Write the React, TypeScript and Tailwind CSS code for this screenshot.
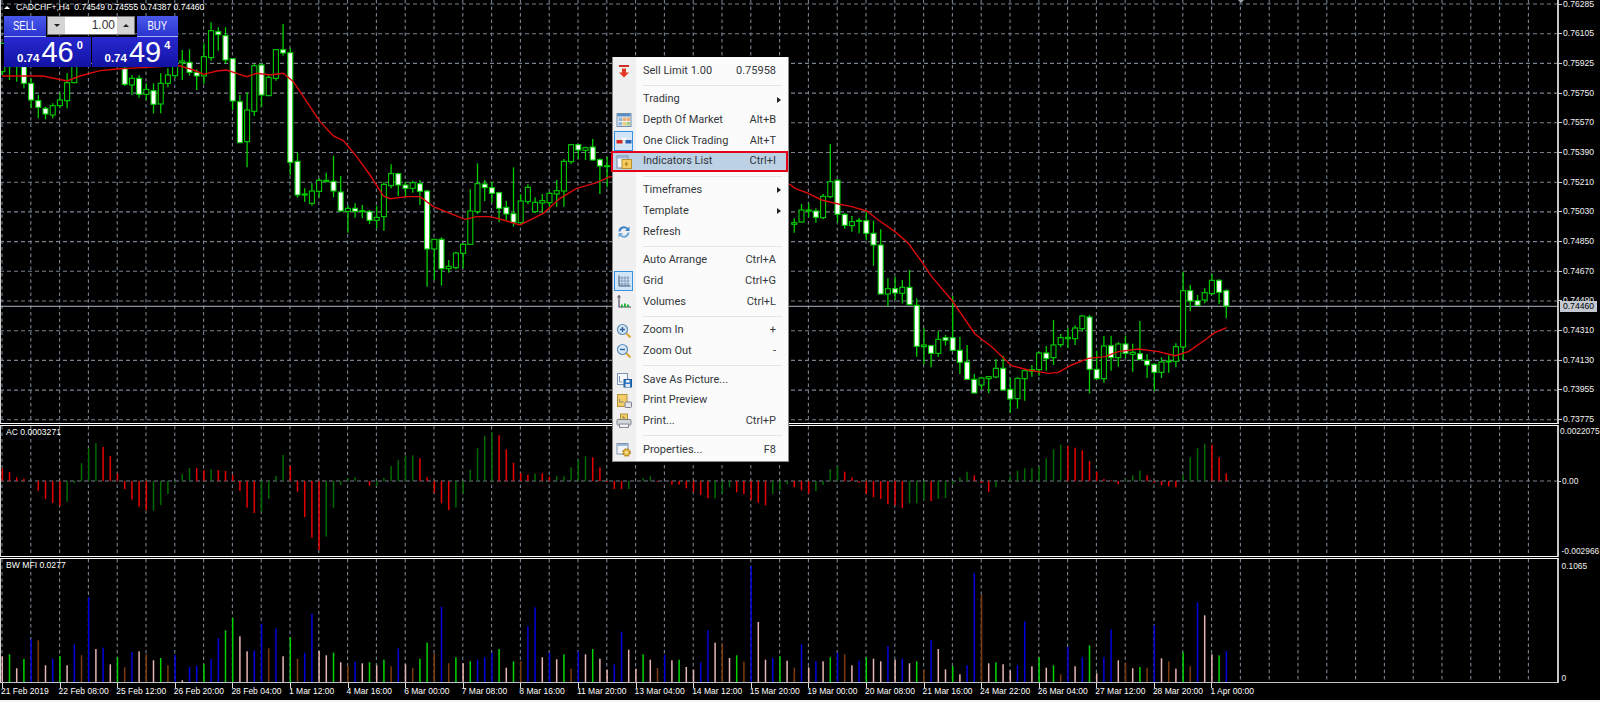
import React from "react";

type C = [number, number, number, number, number];
const W = 1, K = 0;
// [bodyTop, bodyBottom, high, low, white?] in zoomed units
const z1: [number, C][] = [
  [0, [130, 215, 130, 225, K]], [1, [190, 200, 190, 240, K]], [2, [190, 200, 190, 245, K]], [3, [200, 250, 190, 265, W]],
  [4, [250, 300, 235, 325, W]], [5, [302, 322, 285, 355, W]], [6, [325, 342, 320, 358, W]], [7, [317, 345, 310, 355, K]],
  [8, [300, 317, 278, 325, K]], [9, [248, 302, 220, 325, K]], [10, [190, 248, 190, 250, K]],
  [17, [205, 253, 190, 258, W]], [18, [235, 255, 225, 285, K]], [19, [235, 283, 225, 293, W]], [20, [268, 283, 250, 300, K]],
  [21, [272, 313, 250, 340, W]], [22, [250, 312, 220, 340, K]], [23, [225, 250, 205, 262, K]],
];
const z9: C[] = [
  [150, 197, 140, 205, K], [153, 158, 120, 210, K], [157, 187, 118, 197, W], [187, 198, 178, 240, W], [140, 198, 100, 222, K],
  [62, 143, 37, 152, K], [65, 74, 52, 122, W], [77, 150, 52, 160, W], [146, 273, 146, 300, W], [275, 398, 255, 400, W],
  [300, 395, 247, 472, K], [167, 304, 162, 318, K], [165, 255, 160, 290, W], [202, 257, 195, 258, K], [119, 205, 118, 212, K],
  [119, 129, 42, 137, W], [128, 457, 115, 495, W], [454, 555, 428, 563, W], [552, 555, 535, 575, K], [543, 580, 520, 587, K],
  [511, 544, 505, 562, K], [511, 515, 488, 517, K], [514, 543, 437, 562, W], [546, 603, 498, 605, W], [595, 604, 585, 668, K],
  [595, 604, 580, 623, W], [602, 605, 585, 625, K], [605, 631, 600, 642, W], [622, 631, 587, 655, K], [523, 620, 517, 662, K],
  [491, 527, 463, 535, K], [491, 525, 488, 558, W], [525, 535, 515, 560, W], [518, 535, 512, 548, K], [521, 544, 510, 585, W],
  [543, 717, 540, 830, W], [688, 717, 688, 810, K], [688, 776, 682, 827, W], [769, 776, 750, 788, K], [729, 773, 725, 778, K],
  [703, 730, 700, 775, K], [603, 703, 538, 705, K], [521, 605, 460, 612, K], [522, 533, 510, 573, W], [533, 550, 515, 578, W],
  [548, 595, 545, 637, W], [592, 612, 572, 630, W], [611, 637, 472, 650, W], [573, 638, 553, 642, K], [532, 575, 523, 583, K],
  [577, 605, 562, 610, K], [572, 579, 552, 608, K], [550, 578, 545, 598, K], [542, 552, 510, 590, K], [454, 543, 447, 590, K],
  [404, 455, 402, 462, K], [404, 420, 402, 447, W], [413, 421, 410, 450, K], [411, 450, 387, 452, W], [449, 468, 445, 552, W],
  [467, 469, 440, 532, K],
];
const z10: C[] = [
  [278, 283, 265, 308, K], [240, 276, 222, 278, K], [240, 243, 220, 262, K], [243, 262, 235, 278, W], [199, 263, 192, 268, K],
  [155, 200, 42, 205, K], [151, 253, 148, 278, W], [253, 286, 250, 296, W], [275, 287, 258, 305, K], [271, 274, 264, 310, K],
  [272, 310, 245, 330, W], [310, 345, 272, 407, W], [345, 492, 298, 493, W], [476, 492, 445, 528, K], [476, 489, 440, 510, W],
  [472, 490, 450, 520, K], [472, 524, 420, 526, W], [526, 649, 505, 680, W], [645, 650, 595, 703, K], [647, 670, 645, 712, W],
  [628, 670, 603, 680, K], [623, 631, 615, 647, W], [623, 661, 498, 663, W], [661, 697, 620, 732, W], [696, 748, 645, 750, W],
  [748, 789, 732, 790, W], [744, 765, 740, 778, K], [740, 746, 738, 790, K], [715, 741, 688, 745, K], [715, 780, 677, 783, W],
  [778, 807, 745, 848, W], [745, 806, 742, 836, K], [722, 746, 718, 812, K], [719, 724, 705, 740, K], [669, 719, 665, 737, K],
  [669, 686, 648, 722, W], [645, 683, 570, 705, K], [623, 644, 612, 652, K], [622, 626, 595, 654, K], [594, 626, 586, 645, K],
  [558, 596, 555, 605, K], [561, 718, 555, 790, W], [718, 746, 662, 750, W], [648, 746, 618, 758, K], [647, 683, 617, 722, W],
  [642, 683, 637, 710, K], [642, 670, 617, 685, W], [667, 673, 641, 725, K], [671, 689, 573, 691, W], [691, 705, 672, 744, W],
  [703, 727, 700, 783, W], [696, 727, 682, 744, K], [693, 696, 676, 728, K], [650, 694, 640, 712, K], [482, 651, 425, 690, K],
  [482, 513, 465, 543, W], [512, 526, 495, 528, W], [488, 510, 475, 520, K], [451, 491, 433, 495, K], [451, 487, 448, 522, W],
  [482, 528, 478, 565, W],
];

type Bar = { i: number; w: number; c: number[] };
const bars: Bar[] = [];
const add = (i: number, c: C, oy: number) => {
  bars.push({ i, w: c[4], c: [oy + c[0] / 3, oy + c[1] / 3, oy + c[2] / 3, oy + c[3] / 3] });
};
z1.forEach(([i, c]) => add(i, c, 0));
z9.forEach((c, n) => add(24 + n, c, 10));
z10.forEach((c, n) => add(110 + n, c, 130));
const bx = (i: number) => 2.3 + 7.2 * i;

const ma1 = [[2, 228], [20, 228], [43, 228], [67, 243], [80, 228], [100, 212], [117, 207], [128, 205], [180, 197]].map(([x, y]) => [x, y / 3]);
const ma2 = [[150, 168], [190, 180], [222, 193], [260, 183], [290, 180], [320, 190], [350, 200], [380, 190], [420, 195], [460, 190], [490, 215], [520, 260], [570, 335], [610, 378], [640, 392], [680, 440], [720, 495], [760, 558], [780, 566], [830, 560], [870, 560], [910, 590], [960, 610], [1005, 628], [1040, 620], [1080, 620], [1120, 630], [1170, 645], [1240, 610], [1290, 565], [1340, 535], [1400, 518], [1440, 500]].map(([x, y]) => [130 + x / 3, 10 + y / 3]);
const ma3 = [[15, 163], [30, 175], [70, 190], [110, 210], [160, 222], [200, 230], [245, 243], [280, 270], [330, 305], [370, 340], [410, 395], [440, 440], [500, 510], [570, 612], [620, 650], [680, 707], [730, 720], [790, 730], [820, 727], [860, 705], [910, 685], [960, 680], [1000, 665], [1060, 657], [1120, 665], [1170, 677], [1210, 665], [1260, 630], [1290, 607], [1325, 593]].map(([x, y]) => [785 + x / 3, 130 + y / 3]);
const maPts = [...ma1, ...ma2, ...ma3].map((p) => p.join(",")).join(" ");

// AC: colour r/g and offset from zero line
const acRaw = "r-12.7 r-9 r-3.7 r-2.3 r0 r9.7 r18 r22 r24.7 g20.7 g2.3 g-17.7 g-32.7 g-37.7 r-34 r-25 r-7.7 r8 r18.7 r25.7 r29.3 g29.7 g24 g13 g1.7 g-7 g-13 r-13 r-10.7 g-11.7 r-10.7 r-10 r-6 r10 r26.7 r32 g30.3 g17.7 g-5 g-26 r-15 r10.7 r36 r56.7 r69 g55.7 g26.7 g4 g-3 g-3.7 r0 r4.7 g5 g-3 g-15 g-21 g-25 g-25.7 r-22.7 r-3.7 r12 r22.3 r29 g26.3 g12.7 g-11.3 g-32.7 g-45.3 g-48.7 r-45.7 r-31.7 r-18.3 r-8 r-6.3 g-7.3 r-7.7 r-4.3 g-4.7 g-4.7 g-13.7 g-21.7 g-24.7 r-23.7 r-13.7 r1 r8 r8 g8 g0 g-3 g-4.7 r1 r0 r3.7 r3.7 r7.3 r11 r14 r17.3 g17.3 g12.7 g6.3 r11.3 r13 r19 r21.7 r24.3 g13.3 g9 g3.3 r6.3 r9.3 r12.7 g10.3 g3.7 g-11.7 g-15 r-9.3 r-3.7 r1.7 r12.7 r16.3 r18 r23.3 r24.3 r27 g22.3 g22.3 g19.3 r20 g18 g17 g3.3 g-3.7 g-9.3 r-5.7 r2 r11 g6.3 g0 g-5.3 g-10.3 g-12.7 g-12.7 g-14.3 g-22.7 g-31.7 g-36.3 r-35 r-33.3 r-30.7 r-20 r-9.3 r-2 r-0.7 r3.3 g-2 g-5.7 g-10.3 r-5.7 r1.7 r4 r5.3 r6.3 g-5.7 g-23.7 g-32.7 g-37.3 r-36.3 r-23.7 r-7.7".split(" ");
// MFI: colour and height
const mfiRaw = "p25.7 g27.7 p13.7 g23 b42.7 n41.7 p16.7 b23 g26 p16.7 b37.7 n26.7 b85 p33 b34.3 p17.7 g24.7 n14.7 b30 p30.7 n27.7 p21.7 g24 n16.7 b27 p1.7 b15 b16.3 g17.7 b23 b43.7 g51.7 g64.3 p45.7 p30.7 b31.7 b58.3 n33.7 b53.7 p25.7 g44.7 n23.3 b29.3 b68.3 p31 p26.7 g29.3 p19.7 n16 b20.3 p18.7 g19.7 p16.7 g22.3 n15.7 b33.7 p17.7 n14 g23.3 g39.3 n28.7 b75.3 n18.7 g24.7 p18.7 g20.7 b22.3 b24.7 b29.3 g33 p14.3 g20.7 n21 b55.7 b74.7 p24.7 b29.3 p22.7 g27.7 n13.3 b30.7 p27.7 g33 p23.3 p12.3 b17.7 b50.3 p32.3 p13.3 g27.7 p22.3 n14 b27 p21.7 g22.3 p15 p12.3 b19.7 b51.7 p39.3 n38.7 p24 g26.7 n20.3 b116 p60 p22.3 b24 g25.7 p21.3 n14.3 b37.7 p14.7 b20.7 p20.7 g24.7 b29.3 n27.7 p16.7 b21.3 g24.7 p23.3 p20.7 b35.7 p22.3 b23.3 p18.7 g20.7 n12.3 b42 p33 p12.7 g16 p7.7 b16.7 b108.7 n87.3 p18.7 g19.7 p17.7 p11.7 b16.7 b60.7 p15.7 g24.7 p14.3 g16.7 n7.7 b35 p15.7 b24.7 g36.7 p8.7 b24.7 b52.7 p21.7 n19.7 p13.7 g15 n14.3 b57 p23.7 n20.7 p13.3 g29.7 n15.7 b79.7 p66.7 p27.7 g26.7 b31".split(" ");
const acColor: Record<string, string> = { r: "#e80000", g: "#006a00" };
const mfiColor: Record<string, string> = { b: "#0000dc", g: "#00d400", n: "#7c3c10", p: "#e8b4b4" };

const GRID = "#78828f";
const vx = Array.from({ length: 54 }, (_, k) => 2 + 28.8 * k);
const prices = ["0.76285", "0.76105", "0.75925", "0.75750", "0.75570", "0.75390", "0.75210", "0.75030", "0.74850", "0.74670", "0.74490", "0.74310", "0.74130", "0.73955", "0.73775"];
const dates = ["21 Feb 2019", "22 Feb 08:00", "25 Feb 12:00", "26 Feb 20:00", "28 Feb 04:00", "1 Mar 12:00", "4 Mar 16:00", "6 Mar 00:00", "7 Mar 08:00", "8 Mar 16:00", "11 Mar 20:00", "13 Mar 04:00", "14 Mar 12:00", "15 Mar 20:00", "19 Mar 00:00", "20 Mar 08:00", "21 Mar 16:00", "24 Mar 22:00", "26 Mar 04:00", "27 Mar 12:00", "28 Mar 20:00", "1 Apr 00:00"];

const VLines = ({ y1, y2 }: { y1: number; y2: number }) => (
  <g stroke={GRID} strokeWidth="1.1" strokeDasharray="3.5 3">
    {vx.map((x) => <line key={x} x1={x} x2={x} y1={y1} y2={y2} />)}
  </g>
);

/* ---------- menu icons ---------- */
const I = ({ children }: { children: React.ReactNode }) => <svg width="16" height="16" viewBox="0 0 16 16">{children}</svg>;
const icons: Record<string, React.ReactNode> = {
  sell: <I><rect x="3" y="2" width="10" height="2" fill="#c83228" /><path d="M6 5.5h4v4h3l-5 5-5-5h3z" fill="#e23a22" /></I>,
  depth: <I><rect x="1" y="1.5" width="14" height="13" fill="#eef2f6" stroke="#6e8db0" /><rect x="1.5" y="2" width="13" height="2.5" fill="#5c8fc4" /><rect x="2.5" y="5.5" width="3.5" height="3.5" fill="#8fb6dd" /><rect x="2.5" y="10" width="3.5" height="3.5" fill="#8fb6dd" /><rect x="6.5" y="5.5" width="3.5" height="3.5" fill="#eab07a" /><rect x="6.5" y="10" width="3.5" height="3.5" fill="#ecd07a" /><rect x="10.5" y="5.5" width="3.5" height="3.5" fill="#eab07a" /><rect x="10.5" y="10" width="3.5" height="3.5" fill="#a8cc7e" /></I>,
  click: <I><rect x="0.5" y="4" width="15" height="8" fill="#dbe6ef" /><rect x="0.5" y="7" width="6" height="3.5" fill="#d42a22" /><rect x="9.5" y="7" width="6" height="3.5" fill="#2a62b8" /><rect x="6" y="5" width="4" height="2" fill="#fff" /></I>,
  ind: <I><rect x="1" y="2" width="11" height="12" fill="#f4f6fa" stroke="#6d84a6" /><rect x="1.5" y="2.5" width="10" height="2" fill="#8fb0d4" /><rect x="6" y="5.5" width="9.5" height="9" fill="#f2cc5e" stroke="#b98f2e" /><path d="M11 7l-2.5 3.5h2L9.5 13l3-3.5h-2z" fill="#a86c10" /></I>,
  refresh: <I><path d="M2.5 7.5A5.5 5.5 0 0 1 12 4l1.5-1.5V7H9l1.7-1.7A3.7 3.7 0 0 0 4.5 7.5z" fill="#3c82c8" /><path d="M13.5 8.5A5.5 5.5 0 0 1 4 12l-1.5 1.5V9H7l-1.7 1.7a3.7 3.7 0 0 0 6.2-2.2z" fill="#6da8dc" /></I>,
  grid: <I><path d="M3 5h10.5M3 8h10.5M3 11h10.5M6 3v10M9 3v10M12 3v10" fill="none" stroke="#7f97b4" strokeWidth="0.9" /><path d="M3 2.5v10.5h11.5" fill="none" stroke="#3d5270" strokeWidth="1" /></I>,
  vol: <I><path d="M3 1.5v11.5h12" fill="none" stroke="#445" strokeWidth="1.1" /><path d="M1.5 3.5L3 1.5l1.5 2" fill="none" stroke="#445" /><rect x="5" y="10.5" width="1.8" height="2.5" fill="#18b030" /><rect x="8" y="9.5" width="1.8" height="3.5" fill="#18b030" /><rect x="11" y="10.5" width="1.8" height="2.5" fill="#18b030" /></I>,
  zin: <I><circle cx="6.5" cy="6.5" r="5" fill="#d6e8f6" stroke="#5f8fbb" strokeWidth="1.2" /><path d="M4 6.5h5M6.5 4v5" stroke="#2e62a0" strokeWidth="1.4" /><path d="M10.3 10.3l4.2 4.2" stroke="#d9a83a" strokeWidth="2.2" /></I>,
  zout: <I><circle cx="6.5" cy="6.5" r="5" fill="#d6e8f6" stroke="#5f8fbb" strokeWidth="1.2" /><path d="M4 6.5h5" stroke="#2e62a0" strokeWidth="1.4" /><path d="M10.3 10.3l4.2 4.2" stroke="#d9a83a" strokeWidth="2.2" /></I>,
  save: <I><rect x="1.5" y="1.5" width="10" height="11" fill="#f6f8fb" stroke="#7a93b4" /><path d="M3.5 4v6h3" fill="none" stroke="#7a93b4" /><rect x="8" y="7.5" width="7.5" height="7.5" fill="#2f7ac8" stroke="#1f5a98" /><rect x="10" y="8" width="3.5" height="2.5" fill="#e8f0f8" /><rect x="9.5" y="12" width="4.5" height="3" fill="#dfe8f0" /></I>,
  prev: <I><rect x="1.5" y="1.5" width="9.5" height="12" fill="#f2cc66" stroke="#b4913c" /><path d="M3.5 6v3h4" fill="none" stroke="#8a8a70" /><rect x="9" y="9" width="6.5" height="5.5" rx="1" fill="#e4e6ea" stroke="#7a7f88" /></I>,
  print: <I><rect x="4.5" y="1" width="7" height="6" fill="#f2cc66" stroke="#b4913c" /><path d="M7 3v2h2" fill="none" stroke="#8a7a40" /><rect x="1" y="6.5" width="14" height="5.5" rx="1" fill="#d4d6da" stroke="#7e828a" /><rect x="3.5" y="11" width="9" height="3.5" fill="#f1f1f3" stroke="#8a8e96" /></I>,
  props: <I><rect x="1" y="1.5" width="11" height="10.5" fill="#f2f5f9" stroke="#7d93b0" /><rect x="1.5" y="2" width="10" height="2" fill="#9cb8d8" /><circle cx="10.5" cy="10.5" r="3.5" fill="#e3b840" stroke="#b08420" strokeWidth="1.6" strokeDasharray="1.8 1" /><circle cx="10.5" cy="10.5" r="1.2" fill="#fff2c0" /></I>,
};

type Row = { t: string; k?: string; ic?: string; sub?: boolean; sel?: boolean; hi?: boolean } | "sep";
const rows: Row[] = [
  { t: "Sell Limit 1.00", k: "0.75958", ic: "sell" }, "sep",
  { t: "Trading", sub: true }, { t: "Depth Of Market", k: "Alt+B", ic: "depth" }, { t: "One Click Trading", k: "Alt+T", ic: "click", sel: true }, { t: "Indicators List", k: "Ctrl+I", ic: "ind", hi: true }, "sep",
  { t: "Timeframes", sub: true }, { t: "Template", sub: true }, { t: "Refresh", ic: "refresh" }, "sep",
  { t: "Auto Arrange", k: "Ctrl+A" }, { t: "Grid", k: "Ctrl+G", ic: "grid", sel: true }, { t: "Volumes", k: "Ctrl+L", ic: "vol" }, "sep",
  { t: "Zoom In", k: "+", ic: "zin" }, { t: "Zoom Out", k: "-", ic: "zout" }, "sep",
  { t: "Save As Picture...", ic: "save" }, { t: "Print Preview", ic: "prev" }, { t: "Print...", k: "Ctrl+P", ic: "print" }, "sep",
  { t: "Properties...", k: "F8", ic: "props" },
];

const Menu = () => (
  <div className="absolute left-[612px] top-[57px] w-[177px] h-[405px] pt-[3.6px] bg-[#fbfbfb] border-r border-b border-l border-[#8a8a8a] font-['Roboto',sans-serif] text-[11px] text-[#35383c]">
    <div className="absolute left-0 top-0 bottom-0 w-[23px] bg-[#f0f0f0]" />
    {rows.map((r, n) =>
      r === "sep" ? (
        <div key={n} className="relative h-[8px] ml-[30px] mr-[6px] flex items-center">
          <div className="w-full h-px bg-[#e6e6e6]" />
        </div>
      ) : (
        <div key={n} className={`relative flex items-center h-[20.7px] ${r.hi ? "bg-[#bcd1e4]" : ""}`}>
          <div className="relative w-[23px] flex items-center justify-center shrink-0">
            {r.sel ? (
              <div className="w-[19px] h-[20px] -ml-[2px] flex items-center justify-center border border-[#3a90e0] bg-[#d0e6f8]">{r.ic && icons[r.ic]}</div>
            ) : (
              r.ic && <div className="-ml-[1px] flex">{icons[r.ic]}</div>
            )}
          </div>
          <span className="ml-[7px] flex-1 whitespace-nowrap">{r.t}</span>
          {r.k && <span className="mr-[12px] whitespace-nowrap">{r.k}</span>}
          {r.sub && <span className="mr-[7px] w-0 h-0 border-y-[3px] border-y-transparent border-l-[4px] border-l-[#222]" />}
          {r.hi && <div className="absolute -left-[2px] right-0 top-0 bottom-0 border-2 border-[#e6001a]" />}
        </div>
      )
    )}
  </div>
);

const Price = ({ big, sup }: { big: string; sup: string }) => (
  <div className="flex items-start pl-[13px] h-[30px] bg-linear-to-b from-[#2828d0] to-[#1212a4] text-white">
    <span className="mt-[15px] text-[11.5px] font-bold leading-[12px]">0.74</span>
    <span className="ml-[2px] text-[29px] leading-[28px] mt-[1.4px]">{big}</span>
    <span className="ml-[3px] mt-[1.6px] text-[11px] font-bold leading-[12px]">{sup}</span>
  </div>
);

const Narrow = ({ t }: { t: string }) => <span className="inline-block scale-x-[0.8]">{t}</span>;

const OneClick = () => (
  <div className="absolute left-[4px] top-[16px] w-[174px] font-['Liberation_Sans',sans-serif]">
    <div className="flex h-[21px]">
      <div className="w-[42px] bg-linear-to-b from-[#4a58ea] to-[#2a34d0] text-white text-[12px] flex items-center justify-center border-b border-[#aab4f4]"><Narrow t="SELL" /></div>
      <div className="ml-[1px] w-[88px] h-[19px] flex bg-[#d4d4d4] border border-[#777] text-[#333] text-[12px]">
        <div className="w-[17px] flex items-center justify-center">
          <span className="w-0 h-0 border-x-[3px] border-x-transparent border-t-[3px] border-t-[#222]" />
        </div>
        <div className="flex-1 bg-white text-right pr-[2px] leading-[17px]">1.00</div>
        <div className="w-[17px] flex items-center justify-center">
          <span className="w-0 h-0 border-x-[3px] border-x-transparent border-b-[3px] border-b-[#222]" />
        </div>
      </div>
      <div className="ml-[2px] flex-1 bg-linear-to-b from-[#4a58ea] to-[#2a34d0] text-white text-[12px] flex items-center justify-center border-b border-[#aab4f4]"><Narrow t="BUY" /></div>
    </div>
    <div className="grid grid-cols-2 gap-[1px] mt-[0px]">
      <Price big="46" sup="0" />
      <Price big="49" sup="4" />
    </div>
  </div>
);

const Axis = ({ children }: { children: React.ReactNode }) => (
  <div className="relative flex-1 overflow-hidden text-[8.4px] text-[#f0f0f0] whitespace-nowrap">{children}</div>
);

export default function App() {
  return (
    <div className="relative w-[1600px] h-[702px] bg-black flex flex-col overflow-hidden font-['Liberation_Sans',sans-serif]">
      {/* main panel */}
      <div className="flex h-[424px] shrink-0">
        <div className="w-[1559px] h-[424px] border-b border-l border-r-2 border-l-[#d8d8d8] border-r-[#c8c8c8] border-b-white shrink-0">
          <svg width="1556" height="423" viewBox="1 0 1556 423" className="block">
            <g stroke={GRID} strokeWidth="1.1" strokeDasharray="4 3">
              {prices.map((_, k) => <line key={k} x1={0} x2={1557} y1={4 + 29.7 * k} y2={4 + 29.7 * k} />)}
            </g>
            <VLines y1={0} y2={423} />
            <line x1={0} x2={1557} y1={306.3} y2={306.3} stroke="#aab2bf" strokeWidth="1" />
            {bars.map((b) => {
              const x = bx(b.i);
              return (
                <g key={b.i}>
                  <line x1={x} x2={x} y1={b.c[2]} y2={b.c[3]} stroke="#00d000" strokeWidth="1.3" />
                  <rect x={x - 2.5} y={b.c[0]} width={5} height={Math.max(b.c[1] - b.c[0], 1)} fill={b.w ? "#fff" : "#000"} stroke="#00d000" strokeWidth="1.1" />
                </g>
              );
            })}
            <polyline points={maPts} fill="none" stroke="#dc0a0a" strokeWidth="1.4" />
            <path d="M1238 0h6l-3 3z" fill="#9aa0aa" />
          </svg>
        </div>
        <Axis>
          <div className="flex flex-col mt-[-10.85px] text-[8.6px]">
            {prices.map((p) => (
              <div key={p} className="h-[29.7px] shrink-0 flex items-center">
                <span className="w-[3px] h-px bg-[#cfcfcf]" />
                <span className="ml-[1px]">{p}</span>
              </div>
            ))}
          </div>
        </Axis>
      </div>
      <div className="h-px shrink-0" />
      {/* AC panel */}
      <div className="flex h-[132px] shrink-0">
        <div className="w-[1559px] h-[132px] border-y border-l border-r-2 border-l-[#d8d8d8] border-r-[#c8c8c8] border-y-white shrink-0 relative">
          <svg width="1556" height="130" viewBox="1 426 1556 130" className="block">
            <VLines y1={426} y2={556} />
            <line x1={0} x2={1557} y1={481} y2={481} stroke={GRID} strokeWidth="1.2" strokeDasharray="4 3" />
            {acRaw.map((s, i) => {
              const v = parseFloat(s.slice(1));
              if (v === 0) return null;
              return <rect key={i} x={bx(i) - 0.75} width={1.5} y={v < 0 ? 481 + v : 481} height={Math.abs(v)} fill={acColor[s[0]]} />;
            })}
          </svg>
          <div className="absolute left-[5px] top-[0px] text-[8.6px] text-white leading-[12px]">AC 0.0003271</div>
        </div>
        <Axis>
          <div className="flex flex-col h-full">
            <div className="ml-[1px] leading-[12px]">0.0022075</div>
            <div className="flex items-center leading-[12px] mt-[38px]"><span className="w-[2px] h-px bg-[#cfcfcf]" /><span className="ml-[1px]">0.00</span></div>
            <div className="ml-[2.5px] leading-[12px] mt-[57.7px]">-0.002966</div>
          </div>
        </Axis>
      </div>
      <div className="h-px shrink-0" />
      {/* MFI panel */}
      <div className="flex h-[125px] shrink-0">
        <div className="w-[1559px] h-[125px] border-t border-b border-l border-r-2 border-l-[#d8d8d8] border-r-[#c8c8c8] border-t-white border-b-[#c0c4cc] shrink-0 relative">
          <svg width="1556" height="123" viewBox="1 559 1556 123" className="block">
            <VLines y1={559} y2={682} />
            {mfiRaw.map((s, i) => {
              const v = parseFloat(s.slice(1));
              return <rect key={i} x={bx(i) - 0.75} width={1.5} y={682 - v} height={v} fill={mfiColor[s[0]]} />;
            })}
          </svg>
          <div className="absolute left-[5px] top-[0px] text-[8.6px] text-white leading-[12px]">BW MFI 0.0277</div>
        </div>
        <Axis>
          <div className="flex flex-col h-full pt-[2px]">
            <div className="ml-[2.5px] leading-[12px]">0.1065</div>
            <div className="ml-[2.5px] leading-[12px] mt-[99.7px]">0</div>
          </div>
        </Axis>
      </div>
      {/* date axis */}
      <div className="flex flex-1 pl-[1px] text-[8.5px] text-white whitespace-nowrap">
        {dates.map((d) => (
          <div key={d} className="relative w-[57.6px] shrink-0">
            <span className="absolute left-[1px] top-0 h-[5px] w-px bg-[#dcdcdc]" />
            <div className="pt-[2px] leading-[12px]">{d}</div>
          </div>
        ))}
      </div>
      <div className="h-[2px] bg-[#f4f4f4] shrink-0" />

      {/* overlays */}
      <div className="absolute left-[16px] top-[1px] text-[8.5px] leading-[12px] text-white whitespace-pre">CADCHF+,H4  0.74549 0.74555 0.74387 0.74460</div>
      <span className="absolute left-[4px] top-[6px] w-0 h-0 border-x-[3px] border-x-transparent border-b-[3px] border-b-white" />
      <OneClick />
      <div className="absolute left-[1560px] top-[301px] w-[37px] h-[11px] bg-[#c4c8d0] text-black text-[8.6px] leading-[11px] text-center">0.74460</div>
      <Menu />
    </div>
  );
}
